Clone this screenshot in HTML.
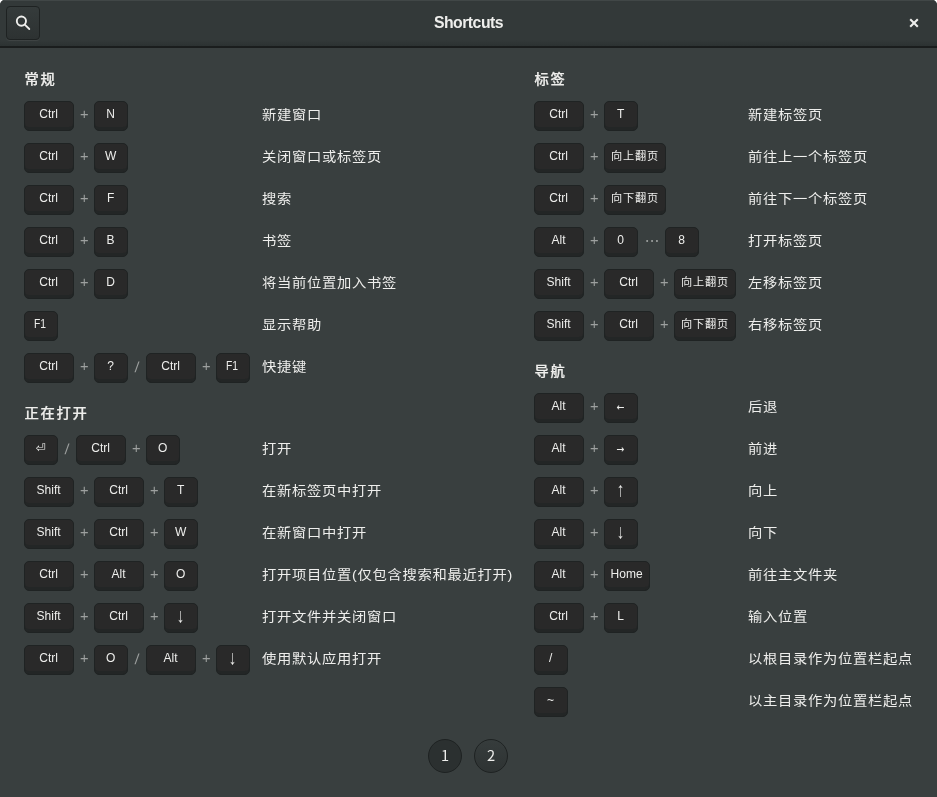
<!DOCTYPE html>
<html lang="zh-CN">
<head>
<meta charset="utf-8">
<title>Shortcuts</title>
<style>
html,body{margin:0;padding:0;}
body{width:937px;height:797px;overflow:hidden;background:#fff;font-family:"Liberation Sans","Noto Sans CJK SC",sans-serif;color:#eeeeec;}
.win{will-change:transform;position:absolute;left:0;top:0;width:937px;height:797px;background:#393f3f;border-radius:5px 5px 0 0;overflow:hidden;}
.hb{position:absolute;left:0;top:0;width:937px;height:46px;background:linear-gradient(to bottom,#333939 0,#333939 86%,#2c3232 100%);border-bottom:2px solid #1a1d1d;box-shadow:inset 0 1px #414747;z-index:2;}
.sbtn{position:absolute;left:6px;top:6px;width:32px;height:32px;border:1px solid #1e2222;border-radius:4px;background:linear-gradient(to bottom,#353b3b,#2d3232);box-shadow:0 1px rgba(255,255,255,.06);}
.sbtn svg{position:absolute;left:8px;top:8px;}
.title{position:absolute;left:0;width:937px;top:0;height:46px;line-height:46px;text-align:center;font-weight:bold;font-size:15.8px;letter-spacing:-.5px;}
.close{position:absolute;left:909px;top:18px;width:10px;height:10px;}
.close svg{display:block;}
.content{position:absolute;left:0;top:47px;width:937px;height:750px;}
.col{position:absolute;top:0;height:750px;}
.cl{left:24px;width:500px;}
.cr{left:534px;width:400px;}
h2{position:absolute;left:0;margin:0;font-size:14.3px;font-weight:500;-webkit-text-stroke:.25px #eeeeec;height:24px;line-height:24px;white-space:nowrap;letter-spacing:1.7px;margin-top:.3px;margin-left:.5px;transform:scaleY(.93);transform-origin:0 50%;}
.row{position:absolute;left:0;height:30px;width:100%;}
.keys{position:absolute;left:0;top:0;height:30px;display:flex;align-items:flex-start;white-space:nowrap;}
.k{box-sizing:border-box;height:30px;border:1px solid #1f2323;border-radius:5px;background:#292929;box-shadow:inset 0 -3px #232626;padding:0 6px 3px;font-size:12px;line-height:25px;text-align:center;display:block;}
.k i{font-style:normal;display:block;position:relative;left:-.4px;}
.k.w{width:50px;}
.k.n{width:34px;}
.k.cj{width:62px;}
.k.home{width:46px;}
.plus,.slash,.dots{display:block;height:27px;line-height:27px;font-size:14.67px;color:#9da09f;text-align:center;margin:0 6px;}
.plus{width:8px;}
.slash{width:6px;position:relative;top:1px;transform:skewX(-5deg);}
.dots{width:15px;position:relative;top:2px;left:.6px;}
.d{position:absolute;top:.3px;height:27px;line-height:27px;font-size:14.3px;letter-spacing:.7px;white-space:nowrap;margin-left:0;transform:scaleY(.905);transform-origin:0 50%;}
.cl .d{left:238px;}
.cr .d{left:214px;}
.pager{position:absolute;left:428px;top:692px;display:flex;}
.pg{box-sizing:border-box;width:34px;height:34px;border-radius:17px;border:1px solid #1e2222;background:linear-gradient(to bottom,#363c3c,#2e3333);margin-right:12px;text-align:center;line-height:30px;font-size:14.6px;display:block;font-family:"Noto Sans CJK SC","Liberation Sans",sans-serif;}
.pg.on{background:#2b3030;}
.k.av i{font-family:"WenQuanYi Zen Hei","DejaVu Sans",sans-serif;font-size:14px;position:relative;top:.6px;}
.k.ah i{font-family:"DejaVu Sans Mono",monospace;font-size:13px;position:relative;top:.3px;}
.k.ret i{font-family:"DejaVu Sans",sans-serif;font-size:12px;}
.k.cj i{font-size:11.2px;letter-spacing:.8px;margin-right:-.8px;position:relative;top:.3px;}
.k.f1 i{transform:scaleX(.86);left:-1.1px;}

</style>
</head>
<body>
<div class="win">
<div class="hb">
<div class="sbtn"><svg width="16" height="16" viewBox="0 0 16 16"><circle cx="6.4" cy="6.1" r="4.6" fill="none" stroke="#eeeeec" stroke-width="1.9"/><path d="M9.8 9.6 L14.3 14" stroke="#eeeeec" stroke-width="1.8" stroke-linecap="round" fill="none"/></svg></div>
<div class="title">Shortcuts</div>
<div class="close"><svg width="10" height="10" viewBox="0 0 10 10"><path d="M1.2 1.2 L8.8 8.8 M8.8 1.2 L1.2 8.8" stroke="#eeeeec" stroke-width="2.1" fill="none"/></svg></div>
</div>
<div class="content">
<div class="col cl">
<h2 style="top:20px">常规</h2>
<div class="row" style="top:54px"><div class="keys"><span class="k w"><i>Ctrl</i></span><span class="plus">+</span><span class="k n"><i>N</i></span></div><div class="d">新建窗口</div></div>
<div class="row" style="top:96px"><div class="keys"><span class="k w"><i>Ctrl</i></span><span class="plus">+</span><span class="k n"><i>W</i></span></div><div class="d">关闭窗口或标签页</div></div>
<div class="row" style="top:138px"><div class="keys"><span class="k w"><i>Ctrl</i></span><span class="plus">+</span><span class="k n"><i>F</i></span></div><div class="d">搜索</div></div>
<div class="row" style="top:180px"><div class="keys"><span class="k w"><i>Ctrl</i></span><span class="plus">+</span><span class="k n"><i>B</i></span></div><div class="d">书签</div></div>
<div class="row" style="top:222px"><div class="keys"><span class="k w"><i>Ctrl</i></span><span class="plus">+</span><span class="k n"><i>D</i></span></div><div class="d">将当前位置加入书签</div></div>
<div class="row" style="top:264px"><div class="keys"><span class="k n f1"><i>F1</i></span></div><div class="d">显示帮助</div></div>
<div class="row" style="top:306px"><div class="keys"><span class="k w"><i>Ctrl</i></span><span class="plus">+</span><span class="k n"><i>?</i></span><span class="slash">/</span><span class="k w"><i>Ctrl</i></span><span class="plus">+</span><span class="k n f1"><i>F1</i></span></div><div class="d">快捷键</div></div>
<h2 style="top:354px">正在打开</h2>
<div class="row" style="top:388px"><div class="keys"><span class="k n ret"><i>⏎</i></span><span class="slash">/</span><span class="k w"><i>Ctrl</i></span><span class="plus">+</span><span class="k n"><i>O</i></span></div><div class="d">打开</div></div>
<div class="row" style="top:430px"><div class="keys"><span class="k w"><i>Shift</i></span><span class="plus">+</span><span class="k w"><i>Ctrl</i></span><span class="plus">+</span><span class="k n"><i>T</i></span></div><div class="d">在新标签页中打开</div></div>
<div class="row" style="top:472px"><div class="keys"><span class="k w"><i>Shift</i></span><span class="plus">+</span><span class="k w"><i>Ctrl</i></span><span class="plus">+</span><span class="k n"><i>W</i></span></div><div class="d">在新窗口中打开</div></div>
<div class="row" style="top:514px"><div class="keys"><span class="k w"><i>Ctrl</i></span><span class="plus">+</span><span class="k w"><i>Alt</i></span><span class="plus">+</span><span class="k n"><i>O</i></span></div><div class="d">打开项目位置(仅包含搜索和最近打开)</div></div>
<div class="row" style="top:556px"><div class="keys"><span class="k w"><i>Shift</i></span><span class="plus">+</span><span class="k w"><i>Ctrl</i></span><span class="plus">+</span><span class="k n av"><i>↓</i></span></div><div class="d">打开文件并关闭窗口</div></div>
<div class="row" style="top:598px"><div class="keys"><span class="k w"><i>Ctrl</i></span><span class="plus">+</span><span class="k n"><i>O</i></span><span class="slash">/</span><span class="k w"><i>Alt</i></span><span class="plus">+</span><span class="k n av"><i>↓</i></span></div><div class="d">使用默认应用打开</div></div>
</div>
<div class="col cr">
<h2 style="top:20px">标签</h2>
<div class="row" style="top:54px"><div class="keys"><span class="k w"><i>Ctrl</i></span><span class="plus">+</span><span class="k n"><i>T</i></span></div><div class="d">新建标签页</div></div>
<div class="row" style="top:96px"><div class="keys"><span class="k w"><i>Ctrl</i></span><span class="plus">+</span><span class="k cj"><i>向上翻页</i></span></div><div class="d">前往上一个标签页</div></div>
<div class="row" style="top:138px"><div class="keys"><span class="k w"><i>Ctrl</i></span><span class="plus">+</span><span class="k cj"><i>向下翻页</i></span></div><div class="d">前往下一个标签页</div></div>
<div class="row" style="top:180px"><div class="keys"><span class="k w"><i>Alt</i></span><span class="plus">+</span><span class="k n"><i>0</i></span><span class="dots">⋯</span><span class="k n"><i>8</i></span></div><div class="d">打开标签页</div></div>
<div class="row" style="top:222px"><div class="keys"><span class="k w"><i>Shift</i></span><span class="plus">+</span><span class="k w"><i>Ctrl</i></span><span class="plus">+</span><span class="k cj"><i>向上翻页</i></span></div><div class="d">左移标签页</div></div>
<div class="row" style="top:264px"><div class="keys"><span class="k w"><i>Shift</i></span><span class="plus">+</span><span class="k w"><i>Ctrl</i></span><span class="plus">+</span><span class="k cj"><i>向下翻页</i></span></div><div class="d">右移标签页</div></div>
<h2 style="top:312px">导航</h2>
<div class="row" style="top:346px"><div class="keys"><span class="k w"><i>Alt</i></span><span class="plus">+</span><span class="k n ah"><i>←</i></span></div><div class="d">后退</div></div>
<div class="row" style="top:388px"><div class="keys"><span class="k w"><i>Alt</i></span><span class="plus">+</span><span class="k n ah"><i>→</i></span></div><div class="d">前进</div></div>
<div class="row" style="top:430px"><div class="keys"><span class="k w"><i>Alt</i></span><span class="plus">+</span><span class="k n av"><i>↑</i></span></div><div class="d">向上</div></div>
<div class="row" style="top:472px"><div class="keys"><span class="k w"><i>Alt</i></span><span class="plus">+</span><span class="k n av"><i>↓</i></span></div><div class="d">向下</div></div>
<div class="row" style="top:514px"><div class="keys"><span class="k w"><i>Alt</i></span><span class="plus">+</span><span class="k home"><i>Home</i></span></div><div class="d">前往主文件夹</div></div>
<div class="row" style="top:556px"><div class="keys"><span class="k w"><i>Ctrl</i></span><span class="plus">+</span><span class="k n"><i>L</i></span></div><div class="d">输入位置</div></div>
<div class="row" style="top:598px"><div class="keys"><span class="k n"><i>/</i></span></div><div class="d">以根目录作为位置栏起点</div></div>
<div class="row" style="top:640px"><div class="keys"><span class="k n"><i>~</i></span></div><div class="d">以主目录作为位置栏起点</div></div>
</div>
<div class="pager"><span class="pg on">1</span><span class="pg">2</span></div>
</div>
</div>
</body>
</html>
